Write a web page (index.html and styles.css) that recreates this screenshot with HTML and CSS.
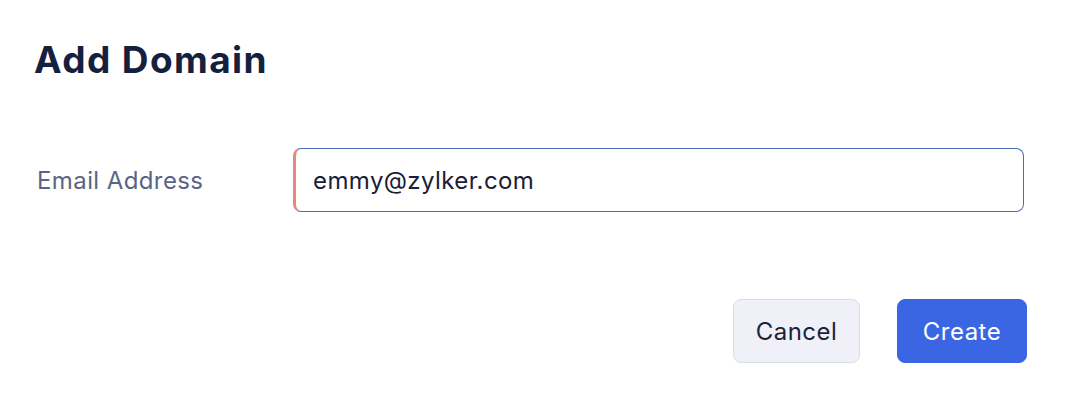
FILE: index.html
```html
<!DOCTYPE html>
<html lang="en">
<head>
<meta charset="utf-8">
<title>Add Domain</title>
<link rel="stylesheet" href="styles.css">
</head>
<body>
<div class="dialog">
  <h1 class="title">Add Domain</h1>
  <div class="field">
    <label class="label" for="email">Email Address</label>
    <div class="input" id="email">emmy@zylker.com</div>
  </div>
  <div class="actions">
    <button class="btn btn-cancel" type="button">Cancel</button>
    <button class="btn btn-create" type="button">Create</button>
  </div>
</div>
</body>
</html>
```
FILE: styles.css
```css
html, body {
  margin: 0;
  padding: 0;
  background: #ffffff;
}
body {
  font-family: Inter, "Noto Sans", "Liberation Sans", sans-serif;
  width: 1068px;
  height: 398px;
  overflow: hidden;
}
.dialog {
  padding: 35px 41px 0 34px;
}
.title {
  margin: 0;
  font-size: 37px;
  line-height: 50px;
  font-weight: 700;
  letter-spacing: 1.4px;
  color: #15203f;
}
.field {
  display: flex;
  align-items: center;
  margin-top: 63px;
  padding-right: 3px;
}
.label {
  width: 256px;
  padding-left: 3px;
  font-size: 24px;
  letter-spacing: 0.4px;
  color: #5a6585;
}
.input {
  flex: 1;
  box-sizing: border-box;
  height: 64px;
  display: flex;
  align-items: center;
  border: 1px solid #4d6cb5;
  border-left: 3px solid #e8867f;
  border-radius: 8px;
  padding-left: 17px;
  font-size: 24px;
  letter-spacing: 0.4px;
  color: #1a2036;
}
.actions {
  display: flex;
  justify-content: flex-end;
  gap: 37px;
  margin-top: 87px;
}
.btn {
  font-family: inherit;
  height: 64px;
  box-sizing: border-box;
  border-radius: 8px;
  font-size: 24px;
  letter-spacing: 0.5px;
  padding: 0;
  cursor: pointer;
}
.btn-cancel {
  width: 127px;
  background: #f0f1f8;
  border: 1px solid #dadde8;
  color: #1c2238;
}
.btn-create {
  width: 130px;
  background: #3b66e3;
  border: 1px solid #3b66e3;
  color: #ffffff;
}
```
